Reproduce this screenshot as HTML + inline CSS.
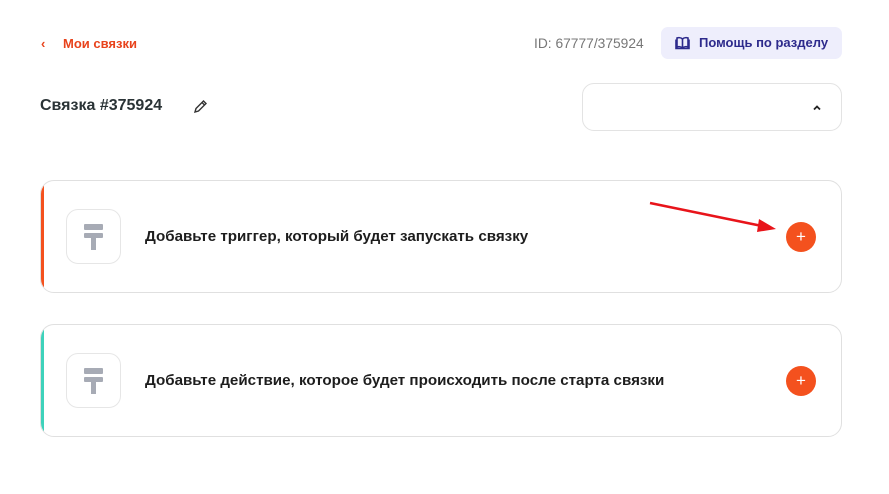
<!DOCTYPE html>
<html><head><meta charset="utf-8"><style>
*{box-sizing:border-box;margin:0;padding:0}
body{width:889px;height:494px;background:#fff;font-family:"Liberation Sans",sans-serif;position:relative;overflow:hidden;color:#222}
.abs{position:absolute}
.back{left:41px;top:36px;color:#e8431c;font-size:13px;font-weight:bold}
.back span{position:absolute;left:22px;top:0;white-space:nowrap}
.id{left:534px;top:36px;font-size:13.8px;color:#777}
.help{left:661px;top:27px;width:181px;height:32px;background:#eeeefc;border-radius:7px;color:#2d2a8c;font-size:13px;font-weight:bold;line-height:32px;padding-left:38px}
.title{left:40px;top:97px;font-size:16px;font-weight:bold;color:#2a3336}
.sel{left:582px;top:83px;width:260px;height:48px;border:1px solid #e3e3e3;border-radius:12px}
.card{left:40px;width:802px;height:113px;border:1px solid #e0e0e0;border-radius:14px;overflow:hidden}
.card .bar{position:absolute;left:0;top:0;bottom:0;width:3px}
.ib{position:absolute;left:25px;top:28px;width:55px;height:55px;border:1px solid #e6e6e6;border-radius:12px}
.ct{position:absolute;left:104px;top:47px;font-size:15.15px;font-weight:bold;color:#1d1d1d}
.plus{position:absolute;left:745px;top:41px;width:30px;height:30px;border-radius:50%;background:#f4511e;color:#fff;font-size:17px;text-align:center;line-height:29px}
</style></head><body>
<div class="abs back">‹<span>Мои связки</span></div>
<div class="abs id">ID: 67777/375924</div>
<div class="abs help"><svg class="abs" style="left:14px;top:9px" width="15" height="14" viewBox="0 0 15 14" fill="none" stroke="#2d2a8c" stroke-width="1.6"><path d="M7.5 3C6 1.5 3.5 1.5 2 2v9c1.5-.5 4-.5 5.5 1 1.5-1.5 4-1.5 5.5-1V2c-1.5-.5-4-.5-5.5 1zM7.5 3v9M1 3.5v9h13v-9"/></svg>Помощь по разделу</div>
<div class="abs title">Связка #375924</div>
<svg class="abs" style="left:193px;top:99px" width="15" height="15" viewBox="0 0 15 15" fill="none" stroke="#333" stroke-width="1.4"><path d="M2 13l1-3.5L10.5 2l2.5 2.5L5.5 12z M9 3.5l2.5 2.5"/></svg>
<div class="abs sel"><svg class="abs" style="left:229px;top:20px" width="10" height="7" viewBox="0 0 10 7" fill="none" stroke="#222" stroke-width="1.8"><path d="M2 5.5l3-3 3 3"/></svg></div>
<div class="abs card" style="top:180px"><div class="bar" style="background:#f4511e"></div><div class="ib"><svg class="abs" style="left:17px;top:14px" width="19" height="26" viewBox="0 0 19 26" fill="#a7abb5"><rect x="0" y="0" width="19" height="6" rx="1"/><rect x="0" y="9" width="19" height="5" rx="1"/><rect x="7" y="9" width="5" height="17"/></svg></div><div class="ct">Добавьте триггер, который будет запускать связку</div><div class="plus">+</div></div>
<div class="abs card" style="top:324px"><div class="bar" style="background:#3ed2bb"></div><div class="ib"><svg class="abs" style="left:17px;top:14px" width="19" height="26" viewBox="0 0 19 26" fill="#a7abb5"><rect x="0" y="0" width="19" height="6" rx="1"/><rect x="0" y="9" width="19" height="5" rx="1"/><rect x="7" y="9" width="5" height="17"/></svg></div><div class="ct">Добавьте действие, которое будет происходить после старта связки</div><div class="plus">+</div></div>
<svg class="abs" style="left:0;top:0" width="889" height="494"><line x1="650" y1="203" x2="762" y2="226" stroke="#e8141a" stroke-width="2.5"/><path d="M776 229 L759 219 L757 232 Z" fill="#e8141a"/></svg>
</body></html>
